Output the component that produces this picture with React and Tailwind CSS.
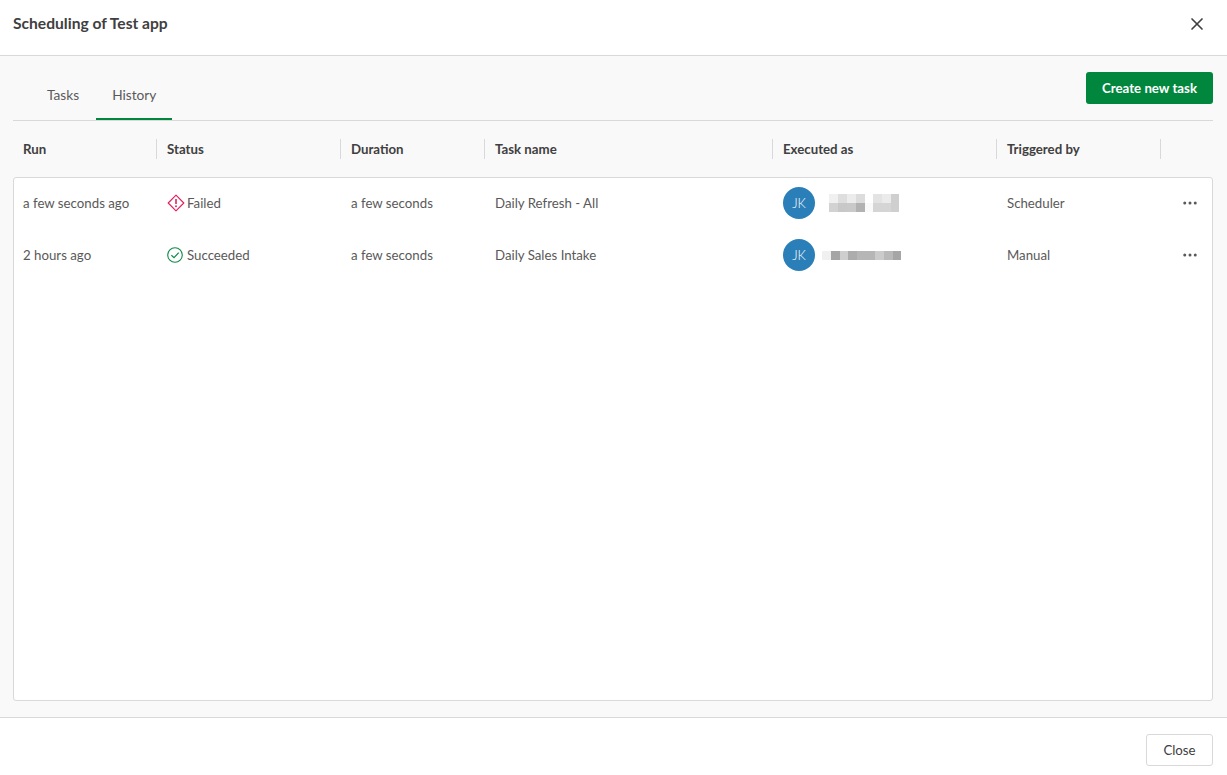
import React from 'react';
import { X, MoreHorizontal } from 'lucide-react';

const cols = 'grid grid-cols-[144px_184px_144px_288px_224px_164px_1fr]';
const rowCols = 'grid grid-cols-[143px_184px_144px_288px_224px_164px_1fr]';

const headers = ['Run', 'Status', 'Duration', 'Task name', 'Executed as', 'Triggered by'];

const FailedIcon = () => (
  <svg width="18" height="18" viewBox="0 0 18 18" fill="none" className="shrink-0">
    <path d="M9 1.2 16.8 9 9 16.8 1.2 9Z" stroke="#e0245e" strokeWidth="1.2" strokeLinejoin="round" />
    <path d="M9 5v5" stroke="#e0245e" strokeWidth="1.6" />
    <circle cx="9" cy="12.3" r="0.95" fill="#e0245e" />
  </svg>
);

const SucceededIcon = () => (
  <svg width="16" height="16" viewBox="0 0 16 16" fill="none" className="shrink-0">
    <circle cx="8" cy="8" r="7.3" stroke="#0f8a47" strokeWidth="1.1" />
    <path d="M4.4 8.2 7 10.7l4.7-5" stroke="#0f8a47" strokeWidth="1.2" />
  </svg>
);

const Avatar = () => (
  <div className="w-8 h-8 rounded-full bg-[#2a7fb8] text-white text-[13px] font-light flex items-center justify-center shrink-0">
    JK
  </div>
);

// blurred out user names
const Blur1 = () => (
  <div className="ml-[14px] flex flex-col">
    <div className="flex">
      <div className="w-[9px] h-[9px] bg-[#f0f0f0]" />
      <div className="w-[9px] h-[9px] bg-[#dedede]" />
      <div className="w-[9px] h-[9px] bg-[#ececec]" />
      <div className="w-[9px] h-[9px] bg-[#dcdcdc]" />
      <div className="w-[8px] h-[9px] bg-white" />
      <div className="w-[9px] h-[9px] bg-[#e3e3e3]" />
      <div className="w-[9px] h-[9px] bg-[#ebebeb]" />
      <div className="w-[8px] h-[9px] bg-[#cfcfcf]" />
    </div>
    <div className="flex">
      <div className="w-[9px] h-[9px] bg-[#d2d2d2]" />
      <div className="w-[9px] h-[9px] bg-[#c8c8c8]" />
      <div className="w-[9px] h-[9px] bg-[#c9c9c9]" />
      <div className="w-[9px] h-[9px] bg-[#b2b2b2]" />
      <div className="w-[8px] h-[9px] bg-[#fafafa]" />
      <div className="w-[9px] h-[9px] bg-[#d5d5d5]" />
      <div className="w-[9px] h-[9px] bg-[#d5d5d5]" />
      <div className="w-[8px] h-[9px] bg-[#cfcfcf]" />
    </div>
  </div>
);

const Blur2 = () => (
  <div className="ml-[7px] flex">
    <div className="w-[9px] h-[9px] bg-[#f0f0f0]" />
    <div className="w-[9px] h-[9px] bg-[#a5a5a5]" />
    <div className="w-[8px] h-[9px] bg-[#cecece]" />
    <div className="w-[9px] h-[9px] bg-[#acacac]" />
    <div className="w-[9px] h-[9px] bg-[#b6b6b6]" />
    <div className="w-[9px] h-[9px] bg-[#b6b6b6]" />
    <div className="w-[9px] h-[9px] bg-[#cbcbcb]" />
    <div className="w-[9px] h-[9px] bg-[#b9b9b9]" />
    <div className="w-[8px] h-[9px] bg-[#a6a6a6]" />
  </div>
);

const Row = ({ run, icon, status, gap, task, blur, trigger }) => (
  <div className={`${rowCols} h-[52px] items-center text-[#595959]`}>
    <div className="pl-[9px]">{run}</div>
    <div className={`pl-[10px] flex items-center ${gap}`}>
      {icon}
      <span>{status}</span>
    </div>
    <div className="pl-[10px]">a few seconds</div>
    <div className="pl-[10px]">{task}</div>
    <div className="pl-[10px] flex items-center">
      <Avatar />
      {blur}
    </div>
    <div className="pl-[10px]">{trigger}</div>
    <div className="flex justify-end pr-[13px]">
      <MoreHorizontal size={18} strokeWidth={2} className="text-[#595959]" />
    </div>
  </div>
);

export default function App() {
  return (
    <div className="w-[1227px] h-[775px] flex flex-col bg-white text-[13.25px] leading-[21px] text-[#404040] font-['Lato',sans-serif] overflow-hidden">
      <header className="h-[56px] shrink-0 border-b border-[#d9d9d9] flex items-center justify-between pl-[13px] pr-[20px] pb-[8px]">
        <h1 className="text-[15.6px] font-bold text-[#404040]">Scheduling of Test app</h1>
        <X size={20} strokeWidth={2} className="text-[#404040]" />
      </header>

      <main className="flex-1 min-h-0 bg-[#f9f9f9] border-b border-[#d9d9d9] pl-[13px] pr-[14px] pb-[16px] flex flex-col">
        <div className="h-[65px] shrink-0 border-b border-[#d9d9d9] flex items-start justify-between">
          <div className="flex pl-[18px] pt-[16px]">
            <div className="h-[48px] pl-4 pr-[17px] pb-[2px] flex items-center text-[#595959] text-[13.7px] border-b-2 border-transparent">Tasks</div>
            <div className="h-[48px] px-4 pb-[2px] flex items-center text-[#595959] text-[13.7px] border-b-2 border-[#00873d]">History</div>
          </div>
          <button className="mt-[16px] w-[127px] h-[32px] rounded-[3px] bg-[#00873d] text-white text-[13.25px] font-bold">
            Create new task
          </button>
        </div>

        <div className={`${cols} h-[56px] shrink-0 items-center font-bold text-[#404040]`}>
          {headers.map((h) => (
            <div key={h} className="h-5 pl-[10px] border-r border-[#d9d9d9] flex items-center">{h}</div>
          ))}
        </div>

        <div className="flex-1 min-h-0 bg-white border border-[#d9d9d9] rounded-[3px]">
          <div className="-mt-px">
            <Row run="a few seconds ago" icon={<FailedIcon />} status="Failed" gap="gap-[2px]" task="Daily Refresh - All" blur={<Blur1 />} trigger="Scheduler" />
            <Row run="2 hours ago" icon={<SucceededIcon />} status="Succeeded" gap="gap-1" task="Daily Sales Intake" blur={<Blur2 />} trigger="Manual" />
          </div>
        </div>
      </main>

      <footer className="h-[57px] shrink-0 flex items-start justify-end pr-[14px] pt-[16px]">
        <button className="w-[67px] h-[32px] bg-white border border-[#d9d9d9] rounded-[3px] text-[#404040] text-[13.25px]">
          Close
        </button>
      </footer>
    </div>
  );
}
